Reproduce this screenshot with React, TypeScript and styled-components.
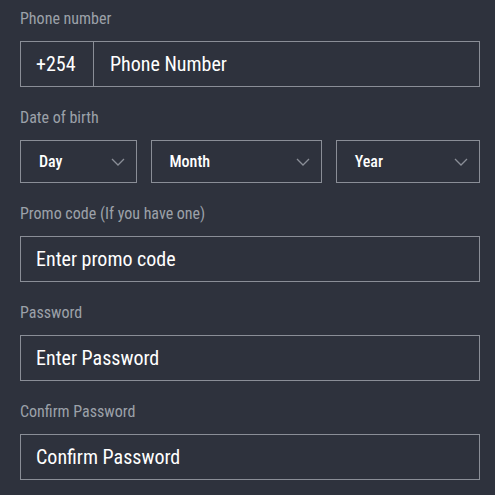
import React from "react";
import styled, { createGlobalStyle } from "styled-components";

const Global = createGlobalStyle`
  html, body { margin: 0; padding: 0; background: #2e323d; }
  body { font-family: "Roboto Condensed", Roboto, "Liberation Sans", sans-serif; font-stretch: condensed; }
  * { box-sizing: border-box; }
`;

const Form = styled.div`
  width: 495px;
  height: 495px;
  background: #2e323d;
  padding: 8px 16px 0 20px;
  display: flex;
  flex-direction: column;
`;

const Field = styled.div`
  display: flex;
  flex-direction: column;
  margin-bottom: 20px;
`;

const Label = styled.div`
  font-size: 16px;
  line-height: 22px;
  color: #9ca1a9;
  margin-bottom: 11px;
`;

const Box = styled.div`
  height: 46px;
  border: 1px solid #8a8e97;
  display: flex;
  align-items: center;
  width: 460px;
`;

const Prefix = styled.div`
  width: 73px;
  height: 100%;
  border-right: 1px solid #8a8e97;
  display: flex;
  align-items: center;
  padding-left: 15px;
  font-size: 20px;
  color: #ffffff;
`;

const Value = styled.div<{ $pad?: number }>`
  font-size: 20px;
  color: #ffffff;
  padding-left: ${(p) => p.$pad ?? 15}px;
`;

const Row = styled.div`
  display: flex;
  gap: 14px;
  width: 460px;
`;

const Select = styled.div<{ $w: number }>`
  width: ${(p) => p.$w}px;
  height: 43px;
  border: 1px solid #8a8e97;
  display: flex;
  align-items: center;
  justify-content: space-between;
  padding: 0 11px 0 18px;
  font-size: 16px;
  font-weight: 500;
  color: #ffffff;
`;

const Chevron = () => (
  <svg width="14" height="8" viewBox="0 0 14 8" fill="none">
    <path d="M1 1l6 6 6-6" stroke="#8a8e97" strokeWidth="1.3" />
  </svg>
);

export default function App() {
  return (
    <>
      <Global />
      <Form>
        <Field>
          <Label>Phone number</Label>
          <Box>
            <Prefix>+254</Prefix>
            <Value $pad={16}>Phone Number</Value>
          </Box>
        </Field>
        <Field>
          <Label>Date of birth</Label>
          <Row>
            <Select $w={117}>Day<Chevron /></Select>
            <Select $w={172}>Month<Chevron /></Select>
            <Select $w={145}>Year<Chevron /></Select>
          </Row>
        </Field>
        <Field>
          <Label>Promo code (If you have one)</Label>
          <Box><Value>Enter promo code</Value></Box>
        </Field>
        <Field>
          <Label>Password</Label>
          <Box><Value>Enter Password</Value></Box>
        </Field>
        <Field>
          <Label>Confirm Password</Label>
          <Box><Value>Confirm Password</Value></Box>
        </Field>
      </Form>
    </>
  );
}
